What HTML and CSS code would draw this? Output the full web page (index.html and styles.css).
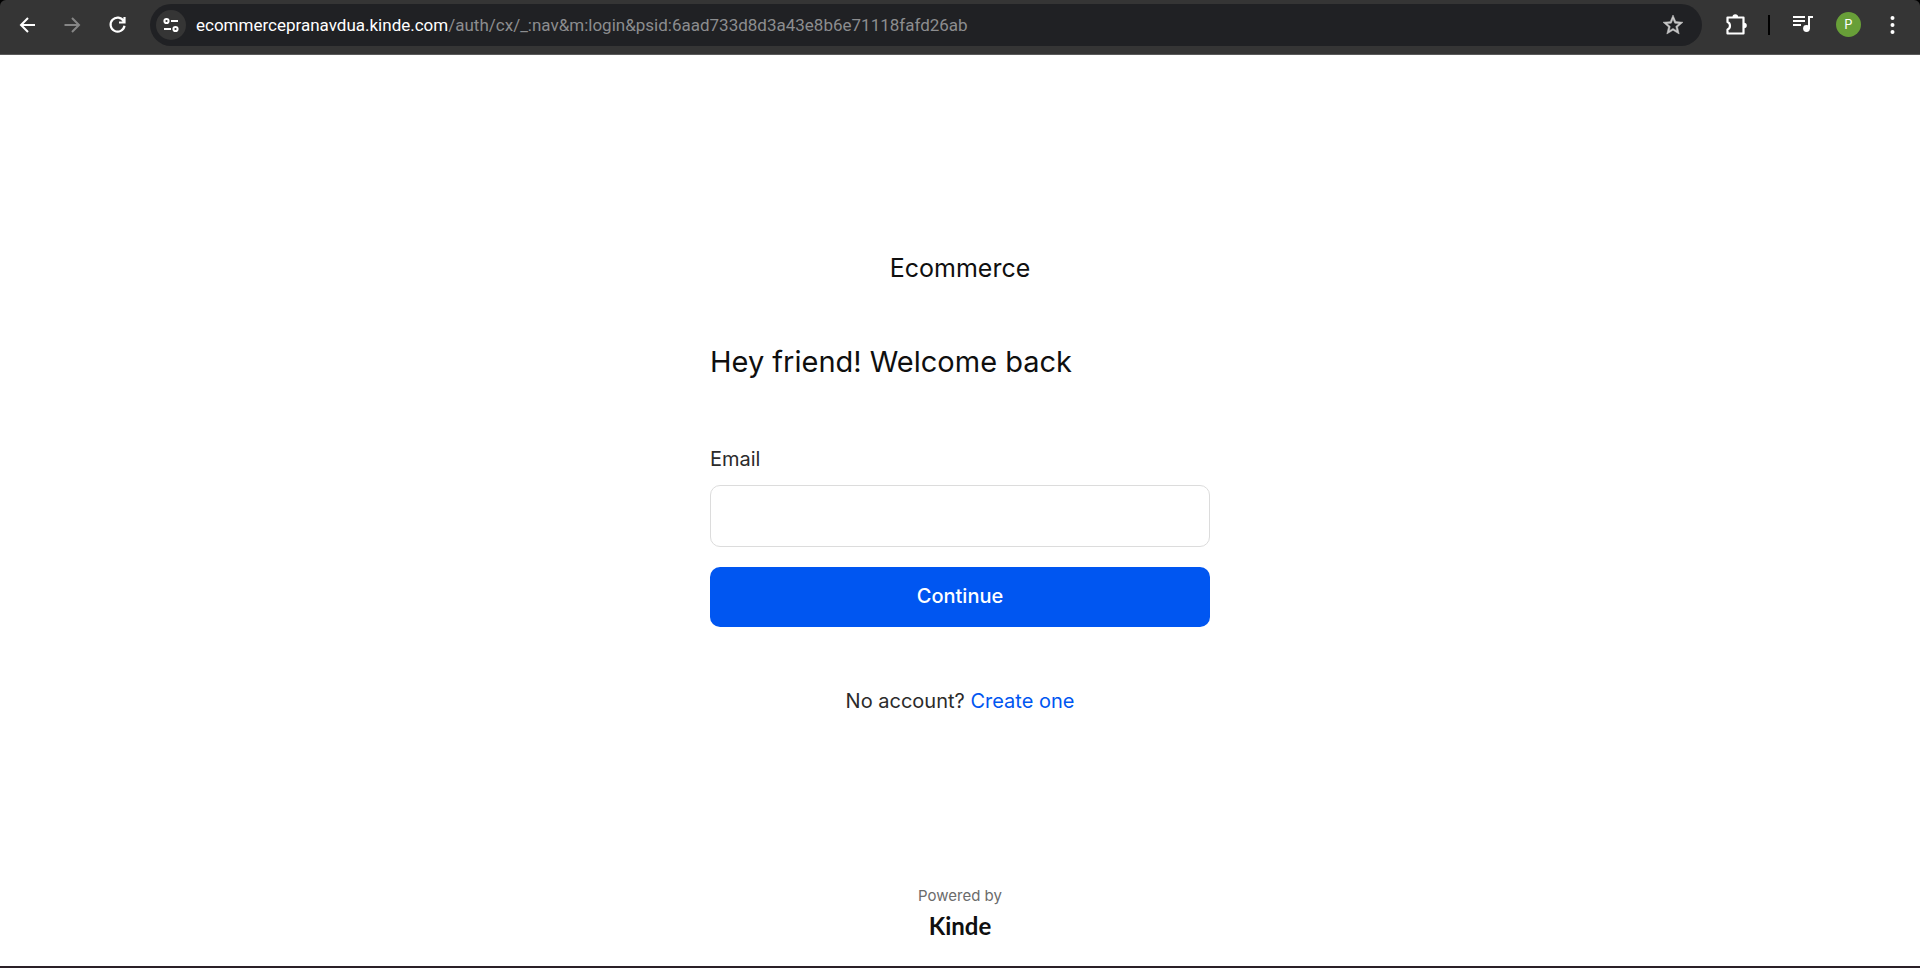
FILE: index.html
```html
<!DOCTYPE html>
<html lang="en">
<head>
<meta charset="utf-8">
<title>Ecommerce</title>
<link rel="stylesheet" href="styles.css">
</head>
<body>
<header class="toolbar">
  <nav class="nav-buttons">
    <button class="icon-button" type="button" aria-label="Back">
      <svg width="24" height="24" viewBox="0 0 24 24" fill="none" stroke="#fff" stroke-width="2"><path d="M20 12H6M13 5l-7 7 7 7"/></svg>
    </button>
    <button class="icon-button" type="button" aria-label="Forward" disabled>
      <svg width="24" height="24" viewBox="0 0 24 24" fill="none" stroke="#868686" stroke-width="2"><path d="M4.500 12H18M12 5l7 7-7 7"/></svg>
    </button>
    <button class="icon-button" type="button" aria-label="Reload">
      <svg width="24" height="24" viewBox="0 0 24 24" fill="none" stroke="#fff" stroke-width="2.200"><path d="M18.700 8.200A7 7 0 1 0 19.500 12.800M19.500 4v5.500h-5.500"/></svg>
    </button>
  </nav>
  <div class="address-bar">
    <button class="site-info" type="button" aria-label="View site information">
      <svg width="18" height="18" viewBox="0 0 18 18" fill="none" stroke="#fff" stroke-width="2"><circle cx="4.500" cy="5" r="2.100"/><path d="M9 5h7M2 13h7"/><circle cx="13.500" cy="13" r="2.100"/></svg>
    </button>
    <p class="url"><span class="url-host">ecommercepranavdua.kinde.com</span>/auth/cx/_:nav&amp;m:login&amp;psid:6aad733d8d3a43e8b6e71118fafd26ab</p>
    <button class="icon-button bookmark" type="button" aria-label="Bookmark this page">
      <svg width="24" height="24" viewBox="0 0 24 24" fill="#c7c7c7" stroke="#c7c7c7" stroke-width=".5"><path d="M22 9.240l-7.190-.62L12 2 9.190 8.630 2 9.240l5.460 4.730L5.820 21 12 17.270 18.180 21l-1.630-7.030L22 9.240zM12 15.400l-3.760 2.270 1-4.280-3.320-2.880 4.380-.38L12 6.100l1.710 4.040 4.380.38-3.320 2.880 1 4.280L12 15.400z"/></svg>
    </button>
  </div>
  <div class="actions">
    <button class="icon-button" type="button" aria-label="Extensions">
      <svg width="24" height="24" viewBox="0 0 24 24" fill="none" stroke="#fff" stroke-width="2.200" stroke-linejoin="round"><path d="M3.500 4.500H19.500V20.500H3.500V16.500C6.800 15.300 6.800 10.200 3.500 9Z"/><path fill="#fff" stroke="none" d="M8.500 4a2.800 2.800 0 0 1 5.600 0zM20 9.700a2.800 2.800 0 0 1 0 5.600z"/></svg>
    </button>
    <span class="divider"></span>
    <button class="icon-button" type="button" aria-label="Media controls">
      <svg width="24" height="24" viewBox="0 0 24 24" fill="none" stroke="#fff" stroke-width="2"><path d="M1 4h12M1 8h12M1 12h8M17 16V4h4"/><circle cx="14.500" cy="15.500" r="3.400" fill="#fff" stroke="none"/></svg>
    </button>
    <button class="avatar" type="button" aria-label="Profile">P</button>
    <button class="icon-button" type="button" aria-label="Menu">
      <svg width="24" height="24" viewBox="0 0 24 24" fill="#fff"><circle cx="11.500" cy="5" r="2"/><circle cx="11.500" cy="12" r="2"/><circle cx="11.500" cy="19" r="2"/></svg>
    </button>
  </div>
</header>
<main class="page">
  <p class="brand">Ecommerce</p>
  <section class="login">
    <h1 class="title">Hey friend! Welcome back</h1>
    <form class="form">
      <label class="label" for="email">Email</label>
      <input class="input" id="email" type="email">
      <button class="submit" type="button">Continue</button>
    </form>
    <p class="signup">No account? <a class="link" href="#">Create one</a></p>
  </section>
  <footer class="footer">
    <span class="powered">Powered by</span>
    <span class="logo">Kinde</span>
  </footer>
</main>
</body>
</html>
```
FILE: styles.css
```css
* {
  box-sizing: border-box;
}

body {
  display: flex;
  flex-direction: column;
  min-height: 100vh;
  margin: 0;
  border-bottom: 2px solid #2a2027;
  background: linear-gradient(#000 8px, #fff 8px);
  color: #0f0f0f;
  font-family: Inter, "Liberation Sans", sans-serif;
}

button {
  padding: 0;
  border: 0;
  background: none;
  font-family: inherit;
}

h1,
p {
  margin: 0;
}

.toolbar {
  display: flex;
  align-items: center;
  height: 55px;
  padding: 0 15px 5px;
  border-bottom: 1px solid #5a5a5a;
  border-radius: 6px 6px 0 0;
  background: #353535;
}

.nav-buttons {
  display: flex;
  gap: 21px;
}

.icon-button {
  display: flex;
  width: 24px;
  height: 24px;
}

.address-bar {
  display: flex;
  flex: 1;
  align-items: center;
  min-width: 0;
  height: 42px;
  margin-left: 21px;
  padding: 0 17px 0 6px;
  border-radius: 21px;
  background: #202124;
}

.site-info {
  display: flex;
  align-items: center;
  justify-content: center;
  width: 30px;
  height: 30px;
  border-radius: 50%;
  background: #353535;
}

.url {
  flex: 1;
  min-width: 0;
  margin-left: 10px;
  overflow: hidden;
  color: #8c8d8f;
  font-family: Roboto, "Open Sans", sans-serif;
  font-size: 17px;
  line-height: 26px;
  white-space: nowrap;
}

.url-host {
  color: #fff;
}

.actions {
  display: flex;
  align-items: center;
  margin-left: 22px;
}

.divider {
  width: 2px;
  height: 20px;
  margin: 0 22px 0 20px;
  background: #000;
}

.avatar {
  width: 25px;
  height: 25px;
  margin: 0 20px;
  border-radius: 50%;
  background: #689f38;
  color: #fff;
  font-size: 13px;
  line-height: 25px;
}

.page {
  display: flex;
  flex: 1;
  flex-direction: column;
  align-items: center;
  padding: 195px 24px 24px;
}

.brand {
  font-size: 25px;
  line-height: 36px;
}

.login {
  width: 100%;
  max-width: 500px;
  margin-top: 54px;
}

.title {
  font-size: 29px;
  font-weight: 400;
  line-height: 44px;
}

.form {
  display: flex;
  flex-direction: column;
  margin-top: 60px;
}

.label {
  color: #2b2b2b;
  font-size: 20px;
  line-height: 30px;
}

.input {
  width: 100%;
  height: 62px;
  margin-top: 11px;
  padding: 0 16px;
  border: 1px solid #dcdcdc;
  border-radius: 10px;
  background: #fff;
  font: inherit;
  font-size: 20px;
}

.submit {
  height: 60px;
  margin-top: 20px;
  padding-bottom: 2px;
  border-radius: 10px;
  background: #0056f1;
  color: #fff;
  font-size: 20px;
  font-weight: 500;
}

.signup {
  margin-top: 59px;
  color: #2b2b2b;
  font-size: 20px;
  line-height: 30px;
  text-align: center;
}

.link {
  color: #0056f1;
  text-decoration: none;
}

.footer {
  display: flex;
  flex-direction: column;
  align-items: center;
  margin-top: auto;
}

.powered {
  color: #6b6b6b;
  font-size: 15px;
  line-height: 24px;
}

.logo {
  margin-top: 2px;
  font-family: Lato, Inter, sans-serif;
  font-size: 24px;
  font-weight: 700;
  line-height: 32px;
}
```
